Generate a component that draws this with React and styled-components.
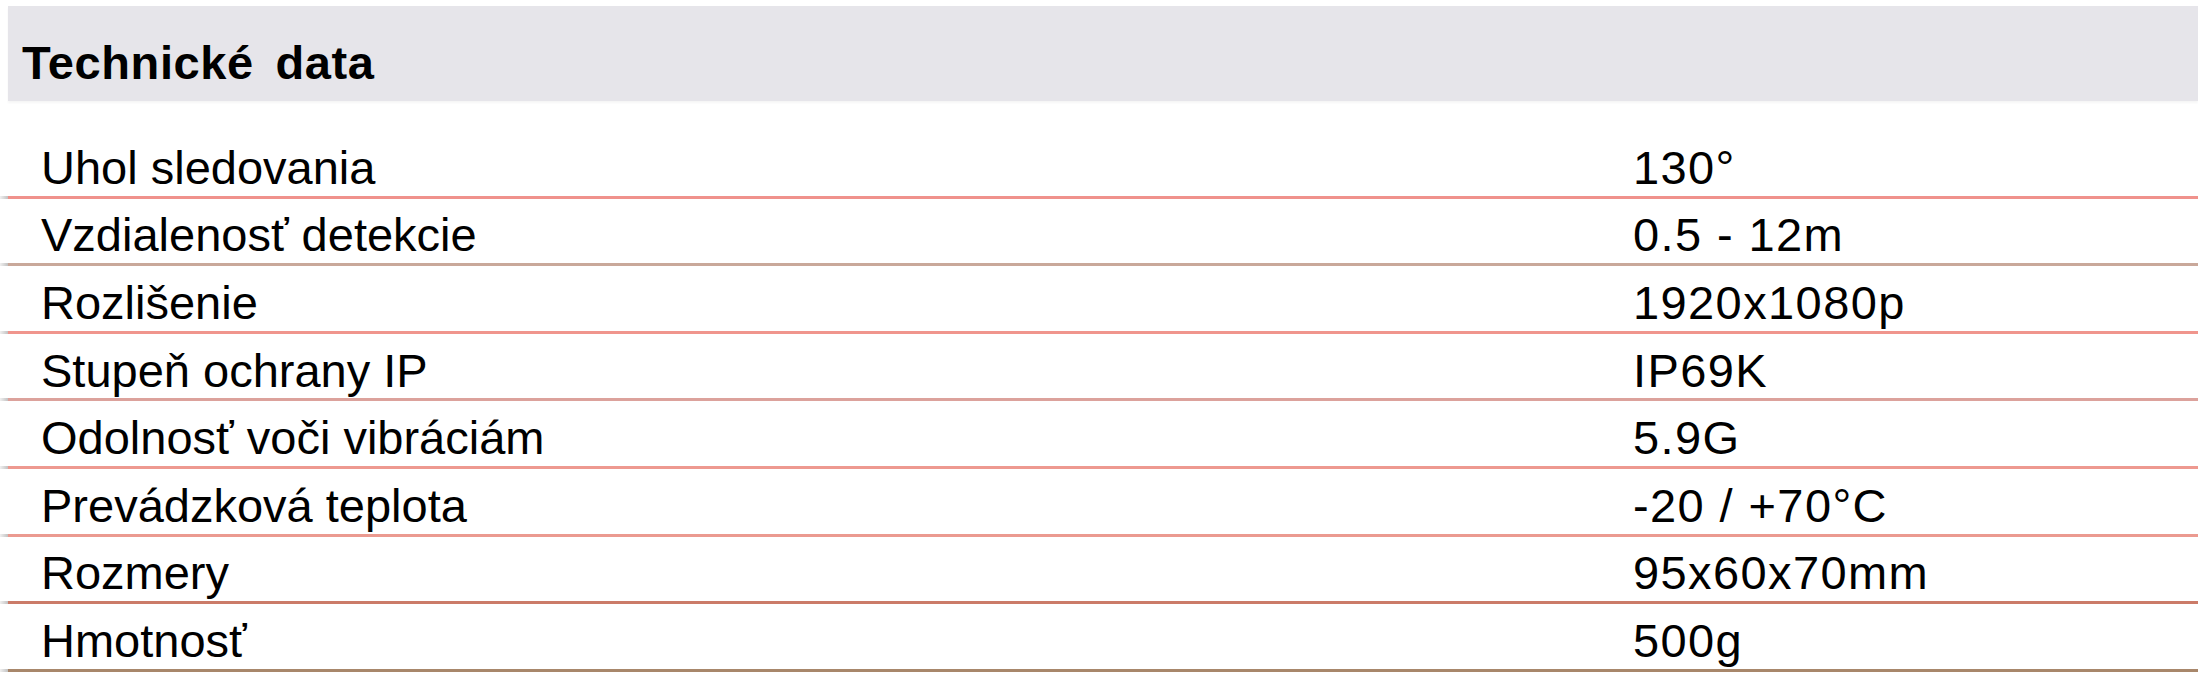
import React from 'react';
import styled, { createGlobalStyle } from 'styled-components';

const GlobalStyle = createGlobalStyle`
  body {
    margin: 0;
    background: #ffffff;
    font-family: "Liberation Sans", Arial, sans-serif;
    color: #000000;
  }
`;

const Wrapper = styled.div`
  width: 2198px;
  padding-top: 6px;
`;

const Header = styled.div`
  margin-left: 8px;
  height: 95px;
  box-sizing: border-box;
  padding: 33px 0 0 14px;
  background: #e6e5ea;
  box-shadow: 0 2px 2px rgba(0, 0, 0, 0.04);
`;

const Title = styled.h2`
  margin: 0;
  font-size: 47px;
  line-height: 1;
  font-weight: 700;
  letter-spacing: 0.6px;
  word-spacing: 8px;
`;

const Table = styled.div`
  margin: 30px 0 0 8px;
`;

const Row = styled.div`
  position: relative;
  display: grid;
  grid-template-columns: 1592px 1fr;
  align-items: end;
  height: 67.6px;
  box-sizing: border-box;
  padding: 0 0 4.8px 33px;
  border-bottom: 3px solid ${p => p.line};
  font-size: 47px;
  line-height: 1;

  &::before {
    content: '';
    position: absolute;
    left: -8px;
    bottom: -3px;
    width: 8px;
    height: 3px;
    background: linear-gradient(to right, rgba(150, 150, 150, 0.15), rgba(120, 120, 120, 0.45));
  }
`;

const Label = styled.span`
  white-space: nowrap;
`;

const Value = styled.span`
  white-space: nowrap;
  letter-spacing: 1.4px;
`;

const rows = [
  ['Uhol sledovania', '130°', '#f0928c'],
  ['Vzdialenosť detekcie', '0.5 - 12m', '#c9a89a'],
  ['Rozlišenie', '1920x1080p', '#f0958d'],
  ['Stupeň ochrany IP', 'IP69K', '#dca29c'],
  ['Odolnosť voči vibráciám', '5.9G', '#ee9990'],
  ['Prevádzková teplota', '-20 / +70°C', '#eb9a90'],
  ['Rozmery', '95x60x70mm', '#cb7b68'],
  ['Hmotnosť', '500g', '#a8876b'],
];

export default function App() {
  return (
    <Wrapper>
      <GlobalStyle />
      <Header>
        <Title>Technické data</Title>
      </Header>
      <Table>
        {rows.map(([label, value, line]) => (
          <Row key={label} line={line}>
            <Label>{label}</Label>
            <Value>{value}</Value>
          </Row>
        ))}
      </Table>
    </Wrapper>
  );
}
